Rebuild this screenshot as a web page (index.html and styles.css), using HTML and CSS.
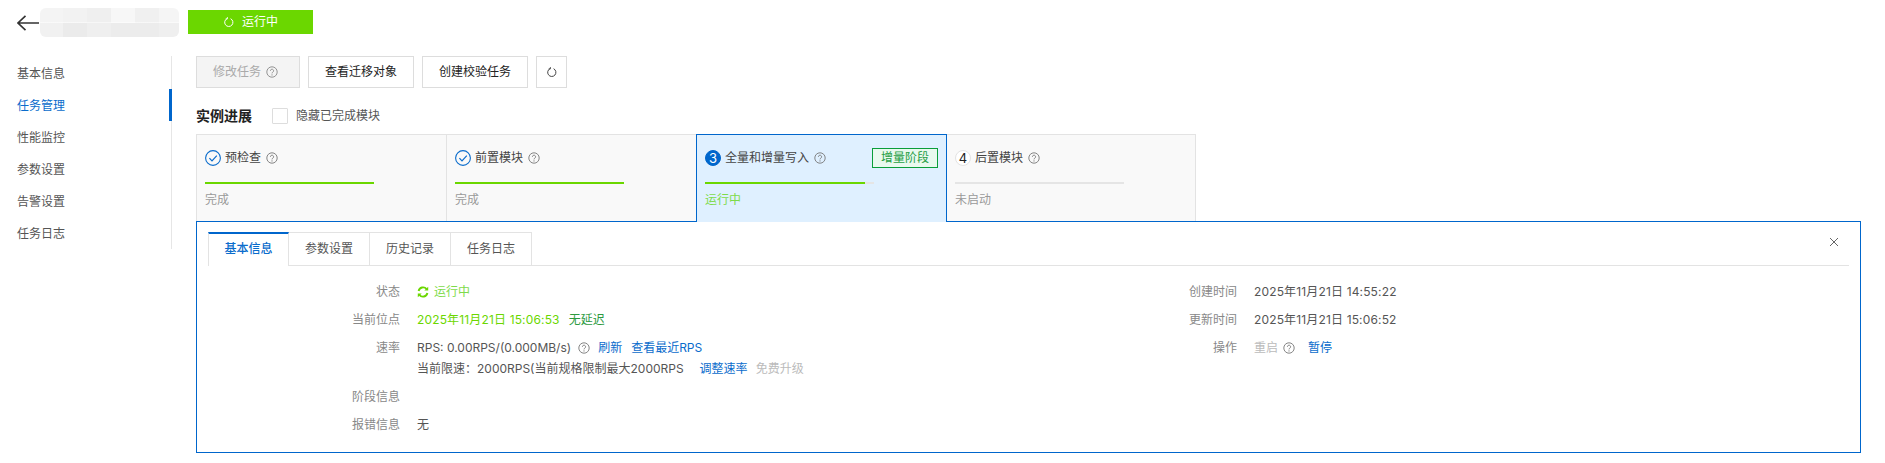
FILE: index.html
```html
<!DOCTYPE html>
<html lang="zh-CN">
<head>
<meta charset="utf-8">
<title>任务管理</title>
<link rel="stylesheet" href="styles.css">
</head>
<body>
<svg class="sprite" width="0" height="0" aria-hidden="true">
  <symbol id="help" viewBox="0 0 12 12">
    <circle cx="6" cy="6" r="5.2" fill="none" stroke="currentColor" stroke-width="0.9"/>
    <path d="M4.4 4.8a1.6 1.6 0 1 1 2.5 1.3c-.6.4-.9.6-.9 1.3" fill="none" stroke="currentColor" stroke-width="0.9"/>
    <circle cx="6" cy="8.9" r="0.55" fill="currentColor"/>
  </symbol>
  <symbol id="reload" viewBox="0 0 12 12">
    <path d="M7.6 2.7A4.1 4.1 0 1 1 4.2 2.6" fill="none" stroke="currentColor" stroke-width="1"/>
    <path d="M4.4 1.1V2.9H2.7" fill="none" stroke="currentColor" stroke-width="0.9"/>
  </symbol>
  <symbol id="check" viewBox="0 0 16 16">
    <circle cx="8" cy="8" r="7.4" fill="none" stroke="currentColor" stroke-width="1.1"/>
    <path d="M4.4 8.2 7 10.8 11.8 5.6" fill="none" stroke="currentColor" stroke-width="1.2"/>
  </symbol>
</svg>

<header class="top">
  <svg class="back" viewBox="0 0 22 16" aria-hidden="true"><path d="M22 8H1M8.5 .8 1 8l7.5 7.2" fill="none" stroke="#333" stroke-width="1.6"/></svg>
  <div class="mosaic"></div>
  <div class="status-badge"><svg class="ic12"><use href="#reload"/></svg>运行中</div>
</header>

<div class="layout">
  <nav class="side">
    <a class="side-item">基本信息</a>
    <a class="side-item active">任务管理</a>
    <a class="side-item">性能监控</a>
    <a class="side-item">参数设置</a>
    <a class="side-item">告警设置</a>
    <a class="side-item">任务日志</a>
  </nav>

  <main class="content">
    <div class="toolbar">
      <button class="btn disabled">修改任务<svg class="ic12"><use href="#help"/></svg></button>
      <button class="btn">查看迁移对象</button>
      <button class="btn">创建校验任务</button>
      <button class="btn icon-btn"><svg class="ic12"><use href="#reload"/></svg></button>
    </div>

    <div class="progress-head">
      <h2 class="section-title">实例进展</h2>
      <span class="checkbox"></span>
      <span class="check-label">隐藏已完成模块</span>
    </div>

    <div class="steps">
      <section class="step">
        <div class="step-title"><svg class="ic16 blue"><use href="#check"/></svg><span>预检查</span><svg class="ic12 help"><use href="#help"/></svg></div>
        <div class="bar"><i class="fill full"></i></div>
        <div class="step-state">完成</div>
      </section>
      <section class="step">
        <div class="step-title"><svg class="ic16 blue"><use href="#check"/></svg><span>前置模块</span><svg class="ic12 help"><use href="#help"/></svg></div>
        <div class="bar"><i class="fill full"></i></div>
        <div class="step-state">完成</div>
      </section>
      <section class="step current">
        <div class="step-title"><span class="num on">3</span><span>全量和增量写入</span><svg class="ic12 help"><use href="#help"/></svg><span class="tag">增量阶段</span></div>
        <div class="bar"><i class="fill part"></i></div>
        <div class="step-state running">运行中</div>
      </section>
      <section class="step last">
        <div class="step-title"><span class="num">4</span><span>后置模块</span><svg class="ic12 help"><use href="#help"/></svg></div>
        <div class="bar"></div>
        <div class="step-state">未启动</div>
      </section>
    </div>

    <section class="panel">
      <div class="tabs">
        <a class="tab active">基本信息</a>
        <a class="tab">参数设置</a>
        <a class="tab">历史记录</a>
        <a class="tab">任务日志</a>
        <svg class="close" viewBox="0 0 10 10" aria-hidden="true"><path d="M1 1l8 8M9 1l-8 8" fill="none" stroke="#666" stroke-width="1"/></svg>
      </div>
      <div class="details">
        <dl class="col left-col">
          <dt>状态</dt>
          <dd class="green"><svg class="ic12 sync" viewBox="0 0 12 12"><path d="M1.6 5A4.6 4.6 0 0 1 9.6 3M10.4 7A4.6 4.6 0 0 1 2.4 9" fill="none" stroke="currentColor" stroke-width="1.9"/><path d="M11.2 .7v3.9H7.3zM.8 11.3V7.4h3.9z" fill="currentColor"/></svg>运行中</dd>
          <dt>当前位点</dt>
          <dd><span class="green date">2025年11月21日 15:06:53</span><span class="dark-green">无延迟</span></dd>
          <dt>速率</dt>
          <dd class="rate">
            <div class="rate-line">RPS: 0.00RPS/(0.000MB/s)<svg class="ic12 help"><use href="#help"/></svg><a class="link">刷新</a><a class="link">查看最近RPS</a></div>
            <div class="rate-line">当前限速：2000RPS(当前规格限制最大2000RPS<a class="link wide">调整速率</a><span class="muted">免费升级</span></div>
          </dd>
          <dt>阶段信息</dt>
          <dd></dd>
          <dt>报错信息</dt>
          <dd>无</dd>
        </dl>
        <dl class="col right-col">
          <dt>创建时间</dt>
          <dd class="date">2025年11月21日 14:55:22</dd>
          <dt>更新时间</dt>
          <dd class="date">2025年11月21日 15:06:52</dd>
          <dt>操作</dt>
          <dd class="ops"><span class="muted">重启</span><svg class="ic12 help"><use href="#help"/></svg><a class="link">暂停</a></dd>
        </dl>
      </div>
    </section>
  </main>
</div>
</body>
</html>
```
FILE: styles.css
```css
* { box-sizing: border-box; }
html, body { height: 100%; }
body {
  margin: 0;
  background: #fff;
  color: #555;
  font: 12px/20px Inter, "Noto Sans CJK SC", sans-serif;
  overflow: hidden;
}
.sprite { display: block; height: 0; }
.ic12 { width: 12px; height: 12px; flex: none; }
.ic16 { width: 16px; height: 16px; flex: none; }
.blue { color: #0a6ccc; }

.top { display: flex; align-items: flex-start; height: 56px; padding: 8px 0 0 17px; }
.back { width: 22px; height: 16px; margin-top: 7px; flex: none; }
.mosaic {
  width: 139px; height: 29px; margin-left: 1px; border-radius: 6px;
  background:
    linear-gradient(90deg, #f4f4f4 0 23px, #f2f2f2 23px 47px, #efefef 47px 71px, #f7f7f7 71px 95px, #f0f0f0 95px 119px, #f5f5f5 119px) top / 100% 50% no-repeat,
    linear-gradient(90deg, #f1f1f1 0 23px, #ebebeb 23px 47px, #efefef 47px 71px, #ececec 71px 119px, #efefef 119px) bottom / 100% 50% no-repeat;
}
.status-badge {
  display: flex; align-items: center; justify-content: center; gap: 7px;
  width: 125px; height: 24px; margin: 2px 0 0 9px;
  background: #6bd700; color: #fff;
}

.layout { display: flex; }
.side { width: 172px; height: 193px; border-right: 1px solid #e6e6e6; flex: none; }
.side-item { display: block; height: 32px; line-height: 36px; padding-left: 17px; position: relative; color: #555; }
.side-item.active { color: #0a6ccc; }
.side-item.active::after { content: ""; position: absolute; right: -1px; top: 1px; width: 3px; height: 32px; background: #0066cc; }

.content { width: 1665px; margin-left: 24px; flex: none; }
.toolbar { display: flex; gap: 8px; }
.btn {
  height: 32px; padding: 0 16px; background: #fff; border: 1px solid #ddd;
  font: inherit; color: #222; display: flex; align-items: center;
}
.btn.disabled { width: 104px; background: #f4f4f4; color: #aaa; gap: 5px; }
.btn.disabled .ic12 { color: #888; }
.icon-btn { width: 31px; padding: 0; justify-content: center; color: #444; }

.progress-head { display: flex; align-items: center; height: 20px; margin-top: 18px; }
.section-title { margin: 0; font-size: 14px; font-weight: 600; color: #222; width: 76px; }
.checkbox { width: 16px; height: 16px; border: 1px solid #ddd; border-radius: 1px; background: #fff; }
.check-label { margin-left: 8px; color: #555; }

.steps { display: flex; margin-top: 8px; }
.step {
  width: 251px; height: 88px; padding: 13px 8px 0; background: #f9f9f9;
  border: 1px solid #e3e3e3; border-bottom: 0; position: relative;
}
.step + .step { margin-left: -1px; }
.step.last { width: 250px; }
.step.current {
  background: #dff0ff; border-color: #0066cc; z-index: 2;
}
.step-title { display: flex; align-items: center; gap: 4px; height: 20px; color: #444; }
.step-title .help { margin-left: 1px; }
.help { color: #777; }
.num {
  width: 16px; height: 16px; border-radius: 50%; background: #fff; border: 1px solid #e3e3e3;
  display: flex; align-items: center; justify-content: center; color: #222; font-size: 13px; line-height: 1; font-weight: 400;
}
.num.on { background: #0066cc; color: #fff; border-color: #0066cc; }
.tag {
  margin-left: auto; width: 66px; height: 20px; border: 1px solid #0a9e3a; background: #e9f9ef;
  color: #1f9e45; line-height: 18px; text-align: center;
}
.bar { width: 169px; height: 2px; margin-top: 14px; background: #e5e5e5; }
.fill { display: block; height: 2px; background: #6bd700; }
.fill.full { width: 100%; }
.fill.part { width: 160px; }
.step-state { margin-top: 6px; color: #999; }
.step-state.running { color: #7edb4a; }

.panel {
  width: 1665px; height: 232px; margin-top: -1px; padding: 10px 11px 0 11px;
  border: 1px solid #0066cc; position: relative; background: #fff;
}
.tabs { display: flex; height: 34px; border-bottom: 1px solid #e3e3e3; position: relative; }
.tab {
  width: 81px; height: 34px; border: 1px solid #e3e3e3; border-left: 0; text-align: center; line-height: 32px; color: #555;
}
.tab.active {
  color: #0a6ccc; border-top: 2px solid #0066cc; border-bottom: 0; background: #fff;
  border-left: 1px solid #e3e3e3; line-height: 30px; z-index: 1; font-weight: 500;
}
.close { position: absolute; top: 5px; right: 10px; width: 10px; height: 10px; }

.details { display: flex; padding-top: 16px; }
.col { margin: 0; display: grid; column-gap: 17px; align-content: start; row-gap: 8px; }
.left-col { width: 819px; grid-template-columns: 192px 1fr; }
.right-col { grid-template-columns: 210px 1fr; }
dt { text-align: right; color: #888; height: 20px; }
dd { margin: 0; display: flex; align-items: center; min-height: 20px; color: #555; }
.date { letter-spacing: .15px; }
.green { color: #6bd700; }
dd.green { color: #7edb4a; }
.sync { margin-right: 5px; color: #6bd700; }
.dark-green { color: #2d9a3f; margin-left: 9px; }
.rate { display: block; }
.rate-line { display: flex; align-items: center; height: 20px; }
.rate-line + .rate-line { margin-top: 1px; }
.rate-line .help { margin: 0 8px 0 7px; }
.link { color: #0a6ccc; }
.link + .link { margin-left: 9px; }
.link.wide { margin-left: 16px; }
.muted { color: #bbb; }
.wide + .muted { margin-left: 8px; }
.ops .help { margin: 0 13px 0 5px; }
```
